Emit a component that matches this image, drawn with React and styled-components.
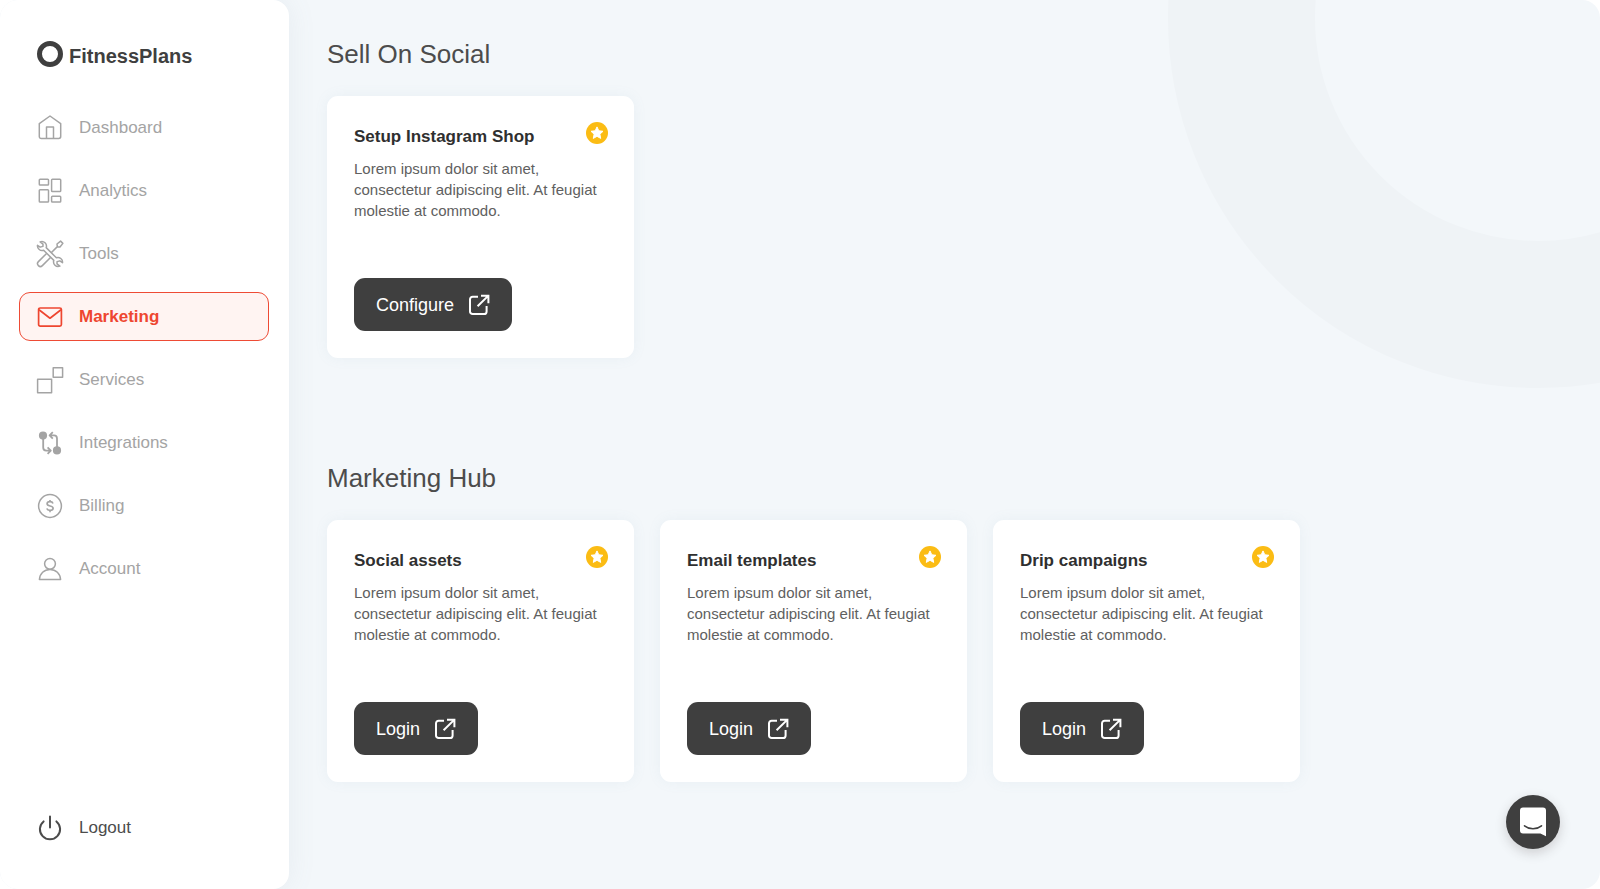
import React from "react";
import styled, { createGlobalStyle, css } from "styled-components";

const GlobalStyle = createGlobalStyle`
  *, *::before, *::after { box-sizing: border-box; }
  body {
    margin: 0;
    background: #ffffff;
    font-family: "Liberation Sans", Arial, Helvetica, sans-serif;
    color: #3f3f3f;
  }
`;

const Shell = styled.div`
  position: relative;
  display: flex;
  min-height: 100vh;
  overflow: hidden;
  border-radius: 18px;
  background: #f3f7fa;
`;

const Sidebar = styled.aside`
  position: relative;
  display: flex;
  flex-direction: column;
  flex: 0 0 289px;
  padding: 39px 20px 37px 19px;
  border-radius: 16px;
  background: #ffffff;
  box-shadow: 0 0 28px rgba(120, 140, 160, 0.1);
`;

const Brand = styled.a`
  display: flex;
  align-items: center;
  gap: 6px;
  margin: 0 0 34px 18px;
  color: #3f3f3f;
  text-decoration: none;
`;

const BrandMark = styled.span`
  width: 26px;
  height: 26px;
  border: 5px solid currentColor;
  border-radius: 50%;
`;

const BrandName = styled.span`
  padding-top: 4px;
  font-size: 20px;
  font-weight: 700;
  line-height: 26px;
`;

const NavList = styled.ul`
  display: flex;
  flex-direction: column;
  gap: 14px;
  margin: 0;
  padding: 0;
  list-style: none;
`;

const itemStyles = css`
  display: flex;
  align-items: center;
  gap: 15px;
  width: 100%;
  height: 49px;
  padding: 0 16px;
  border: 1px solid transparent;
  border-radius: 11px;
  background: transparent;
  font-family: inherit;
  font-size: 17px;
  line-height: 24px;
  text-align: left;
  text-decoration: none;
  cursor: pointer;
`;

const NavLink = styled.a`
  ${itemStyles}
  color: #a4a4a4;
  ${({ $active }) =>
    $active &&
    css`
      border-color: #ee4b35;
      background: #fff4f2;
      color: #ee4630;
      font-weight: 700;
    `}
`;

const LogoutButton = styled.button`
  ${itemStyles}
  margin-top: auto;
  color: #4c4c4c;
`;

const NavIcon = styled.svg`
  flex: none;
  width: 28px;
  height: 28px;
  overflow: visible;
  fill: none;
  stroke: currentColor;
  stroke-width: ${({ $weight }) => $weight || 1.5};
  stroke-linejoin: round;
`;

const Main = styled.main`
  position: relative;
  flex: 1;
  display: flex;
  flex-direction: column;
  gap: 104px;
  min-width: 0;
  padding: 38px;
`;

const Halo = styled.div`
  position: absolute;
  top: -352px;
  right: -308px;
  width: 740px;
  height: 740px;
  border: 147px solid #eff3f6;
  border-radius: 50%;
`;

const Section = styled.section`
  display: flex;
  flex-direction: column;
  gap: 26px;
`;

const SectionTitle = styled.h2`
  margin: 0;
  color: #4c4c4c;
  font-size: 26px;
  font-weight: 400;
  line-height: 32px;
`;

const CardGrid = styled.div`
  display: grid;
  grid-template-columns: repeat(auto-fill, minmax(min(100%, 307px), 307px));
  gap: 26px;
`;

const Card = styled.article`
  display: flex;
  flex-direction: column;
  align-items: flex-start;
  min-height: 262px;
  padding: 26px 26px 27px 27px;
  border-radius: 11px;
  background: #ffffff;
  box-shadow: 0 0 14px rgba(120, 150, 180, 0.08);
`;

const CardHead = styled.header`
  display: flex;
  justify-content: space-between;
  align-items: flex-start;
  width: 100%;
  margin-bottom: 9px;
`;

const CardTitle = styled.h3`
  margin: 0;
  padding-top: 3px;
  color: #2f2f2f;
  font-size: 17px;
  font-weight: 700;
  line-height: 24px;
`;

const Badge = styled.svg`
  flex: none;
  width: 22px;
  height: 22px;
`;

const CardText = styled.p`
  margin: 0 0 24px;
  color: #606060;
  font-size: 15px;
  line-height: 21px;
`;

const ActionButton = styled.button`
  display: flex;
  align-items: center;
  gap: 14px;
  height: 53px;
  margin-top: auto;
  padding: 0 22px;
  border: 0;
  border-radius: 11px;
  background: #3f3f3f;
  color: #ffffff;
  font-family: inherit;
  font-size: 18px;
  line-height: 24px;
  cursor: pointer;
`;

const ActionIcon = styled.svg`
  width: 22px;
  height: 22px;
  fill: none;
  stroke: currentColor;
  stroke-width: 2;
`;

const ChatButton = styled.button`
  position: fixed;
  right: 40px;
  bottom: 40px;
  display: flex;
  align-items: center;
  justify-content: center;
  width: 54px;
  height: 54px;
  padding: 0;
  border: 0;
  border-radius: 50%;
  background: #3f3f3f;
  box-shadow: 0 4px 12px rgba(60, 50, 50, 0.2);
  cursor: pointer;
`;

const ICONS = {
  dashboard: (
    <>
      <path d="M14 2 24.7 9.6V22.6a1.9 1.9 0 0 1-1.9 1.9H5.2a1.9 1.9 0 0 1-1.9-1.9V9.6Z" />
      <path d="M10.5 24.5V13h7v11.5" />
    </>
  ),
  analytics: (
    <>
      <rect x="3.3" y="2.3" width="9.2" height="5.8" rx="0.8" />
      <rect x="15.6" y="2.3" width="9.1" height="12.3" rx="0.8" />
      <rect x="3.3" y="12.7" width="9.2" height="12.3" rx="0.8" />
      <rect x="15.6" y="19.2" width="9.1" height="5.8" rx="0.8" />
    </>
  ),
  tools: (
    <>
      <g transform="translate(14 14) rotate(-45)">
        <path d="M-1-2.8H-13.6a2.8 2.8 0 0 0 0 5.6H-1Z" />
        <path d="M1 0H10.4M10.4 0 12-2.1 16.6-1.6V1.6L12 2.1Z" />
      </g>
      <g transform="translate(14 14) rotate(45)">
        <path
          fill="#ffffff"
          d="M-7.2-1.8H7.2A4.6 4.6 0 0 1 15-2.7L11.8-2.1 10.4.4 12 2.1 15.6 1.6A4.6 4.6 0 0 1 7.2 1.8H-7.2A4.6 4.6 0 0 1-15 2.7L-11.8 2.1-10.4-.4-12-2.1-15.6-1.6A4.6 4.6 0 0 1-7.2-1.8Z"
        />
      </g>
    </>
  ),
  marketing: (
    <>
      <rect x="2.6" y="5" width="22.8" height="18.2" rx="1.6" />
      <path d="M3 6.8 14 15.2 25 6.8" />
    </>
  ),
  services: (
    <>
      <rect x="1.6" y="13.2" width="14" height="13.6" />
      <rect x="17.2" y="1.8" width="9.4" height="9.4" />
    </>
  ),
  integrations: (
    <>
      <circle cx="7" cy="6.6" r="3.2" fill="currentColor" />
      <circle cx="21" cy="21.4" r="3.2" fill="currentColor" />
      <path d="M7.2 9V18.6a3 3 0 0 0 3 3H14.6M11.6 18.4 14.8 21.6 11.6 24.8" />
      <path d="M21 19V9.4a3 3 0 0 0-3-3H13.6M16.8 3.2 13.6 6.4 16.8 9.6" />
    </>
  ),
  billing: (
    <>
      <circle cx="14" cy="14" r="11.4" />
      <path
        strokeWidth="1.7"
        d="M17 11.5c-.4-1.2-1.5-1.8-3-1.8-1.8 0-2.9.8-2.9 2.1 0 3.1 6 1.3 6 4.4 0 1.3-1.2 2.1-3.1 2.1-1.6 0-2.8-.7-3.2-1.9M14 8V9.8M14 18.2V20.2"
      />
    </>
  ),
  account: (
    <>
      <circle cx="14" cy="8.8" r="5.4" />
      <path d="M3.4 24.6C3.7 18.4 8.2 14.4 14 14.4S24.3 18.4 24.6 24.6Z" />
    </>
  ),
  logout: (
    <path
      strokeLinecap="round"
      d="M14 2.4V13.6M7.6 7.4A10.1 10.1 0 1 0 20.4 7.4"
    />
  ),
};

const NAV_ITEMS = [
  { label: "Dashboard", icon: "dashboard" },
  { label: "Analytics", icon: "analytics" },
  { label: "Tools", icon: "tools" },
  { label: "Marketing", icon: "marketing", weight: 1.7 },
  { label: "Services", icon: "services" },
  { label: "Integrations", icon: "integrations", weight: 1.8 },
  { label: "Billing", icon: "billing" },
  { label: "Account", icon: "account" },
];

const BLURB =
  "Lorem ipsum dolor sit amet, consectetur adipiscing elit. At feugiat molestie at commodo.";

const SECTIONS = [
  {
    title: "Sell On Social",
    cards: [{ title: "Setup Instagram Shop", action: "Configure" }],
  },
  {
    title: "Marketing Hub",
    cards: [
      { title: "Social assets", action: "Login" },
      { title: "Email templates", action: "Login" },
      { title: "Drip campaigns", action: "Login" },
    ],
  },
];

function Glyph({ name, weight }) {
  return (
    <NavIcon viewBox="0 0 28 28" $weight={weight} aria-hidden="true">
      {ICONS[name]}
    </NavIcon>
  );
}

function StarBadge() {
  return (
    <Badge viewBox="0 0 22 22" aria-hidden="true">
      <circle cx="11" cy="11" r="11" fill="#fbbc14" />
      <path
        d="M11 4.9 12.8 8.8 17 9.3 13.9 12.2 14.7 16.4 11 14.3 7.3 16.4 8.1 12.2 5 9.3 9.2 8.8Z"
        fill="#ffffff"
        stroke="#ffffff"
        strokeLinejoin="round"
      />
    </Badge>
  );
}

function PlanCard({ title, action }) {
  return (
    <Card>
      <CardHead>
        <CardTitle>{title}</CardTitle>
        <StarBadge />
      </CardHead>
      <CardText>{BLURB}</CardText>
      <ActionButton type="button">
        {action}
        <ActionIcon viewBox="0 0 22 22" aria-hidden="true">
          <path d="M10 2.8H4.6A2.6 2.6 0 0 0 2 5.4V17.4A2.6 2.6 0 0 0 4.6 20H16A2.6 2.6 0 0 0 18.6 17.4V12" />
          <path d="M9.6 12.2 20.4 1.6M13 1.8H20.4V9.2" />
        </ActionIcon>
      </ActionButton>
    </Card>
  );
}

export default function App() {
  return (
    <>
      <GlobalStyle />
      <Shell>
        <Halo />
        <Sidebar>
          <Brand href="#home">
            <BrandMark />
            <BrandName>FitnessPlans</BrandName>
          </Brand>
          <nav>
            <NavList>
              {NAV_ITEMS.map(({ label, icon, weight }) => (
                <li key={label}>
                  <NavLink
                    href={`#${icon}`}
                    $active={icon === "marketing"}
                    aria-current={icon === "marketing" ? "page" : undefined}
                  >
                    <Glyph name={icon} weight={weight} />
                    {label}
                  </NavLink>
                </li>
              ))}
            </NavList>
          </nav>
          <LogoutButton type="button">
            <Glyph name="logout" weight={2} />
            Logout
          </LogoutButton>
        </Sidebar>
        <Main>
          {SECTIONS.map(({ title, cards }) => (
            <Section key={title}>
              <SectionTitle>{title}</SectionTitle>
              <CardGrid>
                {cards.map((card) => (
                  <PlanCard key={card.title} {...card} />
                ))}
              </CardGrid>
            </Section>
          ))}
        </Main>
        <ChatButton type="button" aria-label="Open chat">
          <svg width="28" height="32" viewBox="0 0 28 32" aria-hidden="true">
            <path
              d="M4 1.5H24A3 3 0 0 1 27 4.5V30.3L21.4 27.5H4A3 3 0 0 1 1 24.5V4.5A3 3 0 0 1 4 1.5Z"
              fill="#ffffff"
            />
            <path
              d="M5.5 19.8C10.5 23.8 17.5 23.8 22.5 19.8"
              fill="none"
              stroke="#3f3f3f"
              strokeWidth="1.6"
              strokeLinecap="round"
            />
          </svg>
        </ChatButton>
      </Shell>
    </>
  );
}
